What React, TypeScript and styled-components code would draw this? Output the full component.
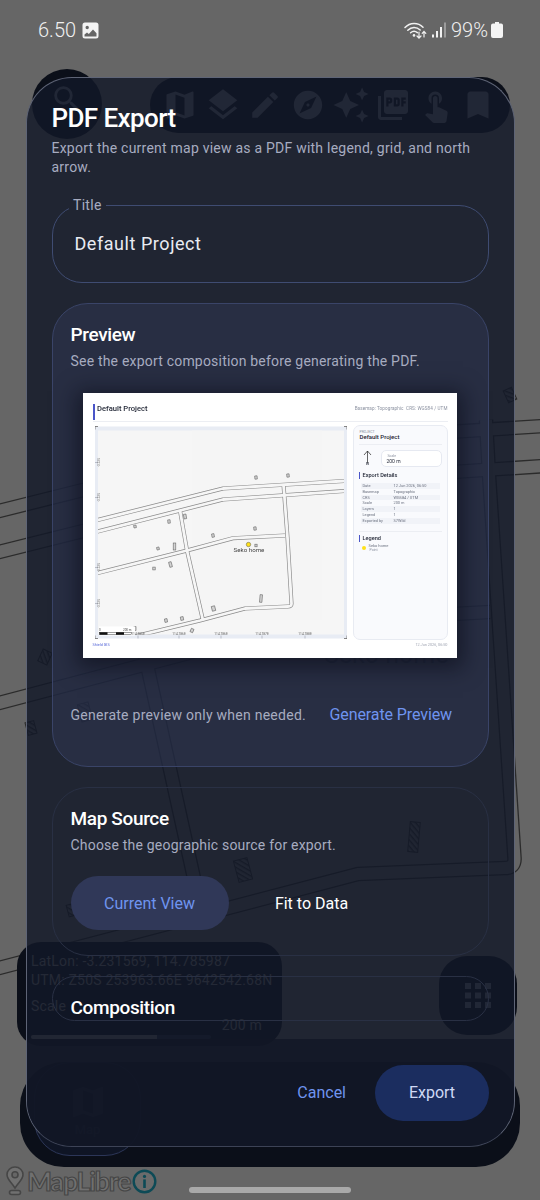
import React from "react";
import styled, { createGlobalStyle } from "styled-components";
import {
  MdMap, MdLayers, MdEdit, MdExplore, MdAutoAwesome, MdPictureAsPdf, MdTouchApp, MdBookmark, MdSearch,
} from "react-icons/md";

const FONT = `Roboto, "Noto Sans", sans-serif`;

const Global = createGlobalStyle`
  html, body { margin: 0; padding: 0; background: #666; }
  body { font-family: ${FONT}; }
  * { box-sizing: border-box; }
`;

const Screen = styled.div`
  position: relative; width: 540px; height: 1200px; overflow: hidden; background: #666666;
`;
const MapCanvas = styled.svg`
  position: absolute; inset: 0; width: 540px; height: 1200px;
`;
const MapLabel = styled.div`
  position: absolute; left: 324px; top: 640px; font-size: 25px; color: #333; white-space: nowrap;
`;

/* status bar */
const StatusBar = styled.div`
  position: relative; height: 60px; padding: 0 37px 0 38px; display: flex; align-items: center; justify-content: space-between; color: #f1f1f1;
`;
const StatusSide = styled.div`
  display: flex; align-items: center; gap: ${(p: { $gap: number }) => p.$gap}px;
`;
const StatusText = styled.span`
  font-size: 20px; font-weight: 300; line-height: 1;
`;
const Battery = styled.span`
  margin-left: -2px; display: flex;
`;

/* things behind the dialog */
const SearchCircle = styled.div`
  position: absolute; left: 32px; top: 69px; width: 70px; height: 70px; border-radius: 50%; background: #0b0f19;
  display: flex; align-items: flex-start; justify-content: center; padding-top: 13px; color: #6c707c;
`;
const ToolPill = styled.div`
  position: absolute; left: 150px; top: 77px; width: 360px; height: 56px; border-radius: 28px; background: #0b0f19;
  display: grid; grid-template-columns: repeat(8, 42.6px); align-items: center; justify-items: center; padding: 0 0 0 9px; color: #6c707c;
`;
const CoordPanel = styled.div`
  position: absolute; left: 17px; top: 942px; width: 265px; height: 104px; border-radius: 24px; background: #0b0f19;
  padding: 10px 14px; color: #7c7c7c; font-size: 14px; line-height: 19px; white-space: nowrap; letter-spacing: 0.2px;
`;
const ScaleLine = styled.div`
  margin-top: 7px;
`;
const ScaleRow = styled.div`
  display: flex; align-items: center; justify-content: flex-end; height: 19px; padding-right: 6px;
`;
const ScaleTrack = styled.div`
  width: 180px; height: 4px; border-radius: 2px; background: #222836; overflow: hidden;
`;
const ScaleFill = styled.div`
  width: 70%; height: 100%; background: #6c6c6c;
`;
const GridButton = styled.div`
  position: absolute; left: 439px; top: 956px; width: 78px; height: 79px; border-radius: 28px; background: #0b0f19;
  display: flex; align-items: center; justify-content: center; color: #6c707c;
`;
const BottomNav = styled.div`
  position: absolute; left: 20px; top: 1062px; width: 500px; height: 105px; border-radius: 44px; background: #0b0f19;
`;
const NavItem = styled.div`
  position: absolute; left: 14px; top: 0; width: 107px; height: 94px; border-radius: 36px; border: 1px solid #2c3658;
  background: #0f1525; display: flex; flex-direction: column; align-items: center; justify-content: center; color: #4a5060; font-size: 13px;
`;

/* dialog */
const Dialog = styled.div`
  position: absolute; left: 26px; top: 77px; width: 489px; height: 1070px; border-radius: 46px; overflow: hidden;
  background: rgba(18, 24, 40, 0.83); border: 1.5px solid #5e6476; border-bottom-color: #3d4356;
  display: flex; flex-direction: column;
`;
const DialogScroll = styled.div`
  flex: 1; min-height: 0; overflow: hidden; padding: 22px 25px 0 24.5px;
`;
const Heading = styled.h1`
  margin: 0; font-size: 26px; line-height: 36px; font-weight: 500; color: #fff; letter-spacing: -0.6px;
`;
const Sub = styled.p`
  margin: 3px 0 0; font-size: 14px; line-height: 18.5px; color: #a7acc0; letter-spacing: 0.23px;
`;
const TitleField = styled.fieldset`
  margin: 21px 0 0; padding: 0 22px; height: 86px; border: 1.5px solid #3f4c72; border-radius: 30px; display: flex; align-items: center;
`;
const TitleLegend = styled.legend`
  margin-left: -5.5px; padding: 0 4px; font-size: 14px; line-height: 16px; color: #a7acc0; letter-spacing: 0.3px;
`;
const TitleValue = styled.div`
  font-size: 18px; color: #e9ebf2; letter-spacing: 0.55px; margin-top: -8px;
`;
const Card = styled.section<{ $strong?: boolean }>`
  margin-top: 20px; padding: 19px 18px 0; border-radius: 36px;
  border: 1.5px solid ${(p) => (p.$strong ? "#3a4468" : "#293044")};
  background: ${(p) => (p.$strong ? "rgba(60, 70, 110, 0.3)" : "transparent")};
`;
const CardTitle = styled.h2`
  margin: 0; font-size: 19px; line-height: 24px; font-weight: 500; color: #fff; letter-spacing: -0.35px;
`;
const CardSub = styled.p`
  margin: 4px 0 0; font-size: 14px; line-height: 20px; color: #a7acc0; letter-spacing: 0.2px;
`;
const PreviewRow = styled.div`
  height: 108px; display: flex; align-items: center; justify-content: space-between; padding: 6px 18px 0 0;
`;
const Hint = styled.span`
  font-size: 14px; color: #a7acc0; letter-spacing: 0.26px;
`;
const LinkAction = styled.span`
  font-size: 16px; color: #6f94ef; margin-top: -2px; letter-spacing: -0.1px;
`;
const Choices = styled.div`
  display: flex; margin-top: 21px; height: 54px; margin-bottom: 25px;
`;
const Choice = styled.div<{ $on?: boolean }>`
  width: ${(p) => (p.$on ? 158 : 146)}px; margin-left: ${(p) => (p.$on ? 0 : 10)}px; border-radius: 27px; display: flex; align-items: center; justify-content: center;
  font-size: 16px; color: ${(p) => (p.$on ? "#6f94ef" : "#ffffff")}; background: ${(p) => (p.$on ? "#303858" : "transparent")};
`;
const Footer = styled.div`
  height: 107px; flex: none; background: rgba(17, 22, 37, 0.8); display: flex; align-items: center; justify-content: flex-end; gap: 29px; padding: 0 25px 0 0;
`;
const Cancel = styled.span`
  font-size: 16px; color: #6f94ef;
`;
const ExportButton = styled.div`
  width: 114px; height: 56px; border-radius: 28px; background: #1b2d5f; color: #cfd9f5; font-size: 16px; display: flex; align-items: center; justify-content: center;
`;

/* thumbnail page */
const PageShot = styled.div`
  width: 374px; height: 265px; margin: 22px 0 0 12px; background: #fff; padding: 11px 9px 0 10px; display: flex; flex-direction: column;
  box-shadow: 0 4px 20px 6px rgba(8, 10, 20, 0.55); filter: blur(0.28px); color: #1f2433;
`;
const PageHead = styled.div`
  height: 18px; display: flex; justify-content: space-between; align-items: flex-start; border-bottom: 1px solid #eceef3;
`;
const PageTitle = styled.div`
  height: 16px; padding-left: 2.5px; border-left: 2px solid #4a55c8; font-size: 7.6px; line-height: 9px; font-weight: 500; color: #1f2433;
`;
const PageMeta = styled.div`
  font-size: 4.6px; line-height: 10px; color: #8b91a0; letter-spacing: 0.1px;
`;
const PageBody = styled.div`
  margin-top: 3px; height: 216px; display: flex; gap: 6px; padding-left: 2px;
`;
const MapFrame = styled.svg`
  width: 252px; height: 213px; margin-top: 1px; flex: none; display: block;
`;
const Side = styled.div`
  flex: 1; height: 215px; border: 1px solid #e8ebf2; border-radius: 7px; background: #f9fafd; padding: 4px 5px;
`;
const Tiny = styled.div`
  font-size: 3.5px; line-height: 4px; color: #8b91a0; padding-left: 1px;
`;
const SideName = styled.div`
  font-size: 6px; line-height: 6px; font-weight: 500; padding: 0 0 4px 1px; border-bottom: 1px solid #eceef3;
`;
const NorthRow = styled.div`
  display: flex; align-items: center; gap: 7px; margin-top: 4px; padding-left: 3px; height: 18px;
`;
const North = styled.div`
  width: 12px; display: flex; flex-direction: column; align-items: center; font-size: 3.5px; font-weight: 700; line-height: 3px;
`;
const ScaleBox = styled.div`
  flex: 1; height: 17px; border-radius: 5px; border: 1px solid #e6e9f1; background: #fff; padding: 3px 0 0 5px;
`;
const ScaleVal = styled.div`
  font-size: 5px; line-height: 7px; color: #2a2f3e;
`;
const SideHead = styled.div<{ $top: number }>`
  margin-top: ${(p) => p.$top}px; height: 7px; padding-left: 3px; border-left: 1.5px solid #4a55c8; font-size: 5.6px; line-height: 7px; font-weight: 500;
`;
const DetailRows = styled.div`
  margin-top: 4px; padding: 0 2px; display: grid; grid-template-columns: 31px 1fr; grid-auto-rows: 5.8px;
`;
const Cell = styled.div<{ $shade?: boolean }>`
  font-size: 3.9px; line-height: 5.8px; color: #6c7280; padding-left: 2px; background: ${(p) => (p.$shade ? "#f1f3f8" : "transparent")}; white-space: nowrap;
`;
const SideRule = styled.div`
  height: 1px; background: #eceef3; margin-top: 7px;
`;
const LegendRow = styled.div`
  display: flex; gap: 3px; margin: 2px 0 0 3px; align-items: center;
`;
const LegendDot = styled.div`
  width: 4px; height: 4px; border-radius: 50%; background: #ffe11a;
`;
const LegendName = styled.div`
  font-size: 4px; line-height: 4.5px; color: #6c7280;
`;
const PageFoot = styled.div`
  display: flex; justify-content: space-between; font-size: 3.8px; line-height: 6px; color: #a0a5b2; padding-top: 1px;
`;
const FootBrand = styled.span`
  color: #5566d8;
`;

/* logo */
const LogoWrap = styled.div`
  position: absolute; left: 6px; top: 1166px; display: flex; align-items: center; height: 30px;
`;
const LogoText = styled.span`
  font-family: Lato, ${FONT}; font-size: 26.5px; font-weight: 700; line-height: 29px; color: #707070; -webkit-text-stroke: 1.2px #464646; letter-spacing: -1.1px; margin: 0 2px 0 3px;
`;
const HomeBar = styled.div`
  position: absolute; left: 189px; top: 1187px; width: 162px; height: 6px; border-radius: 3px; background: #a9a9a9;
`;

/* roads in the page's pixels */
const BIG_ROADS = [
  "M-5 512 L271 443 L545 426",
  "M-5 553 L271 484 L545 466",
  "M-5 704 L306 622 L490 612",
  "M-5 969 L358 874 L505 868 Q515 868 514.5 858 L489 475 L486 420",
  "M116 524 L201 910",
];
const BIG_BUILDINGS: [number, number, number, number, number][] = [
  [45, 657, 10, 13, 25], [31, 728, 9, 13, -15], [510, 395, 9, 13, -25], [414, 837, 10, 30, 5], [243, 870, 14, 22, -15],
  [72, 910, 9, 12, -15], [130, 905, 9, 12, -10], [85, 712, 11, 18, -15], [160, 612, 10, 14, -15],
];
/* roads and buildings in the thumbnail's pixels */
const THUMB_ROADS = [
  "M88 522 L223 488 L352 480",
  "M88 533.5 L223 499 L352 490",
  "M88 575 L187 550 L233 537.7 L285 535",
  "M130 637 L200 620 L245 608 L288 606 Q291.7 606 291.5 603 L287.5 537 L283.5 484",
  "M180 510 L187 550 L203 620",
];
const THUMB_BUILDINGS: [number, number, number, number, number][] = [
  [256, 477, 2.4, 3.2, -5], [288, 475, 2.4, 3.2, -5], [135, 526, 2.4, 2.6, -10], [169, 521, 2.4, 3.4, -5],
  [185, 516, 2.6, 4.6, -10], [255, 528, 2.4, 3.2, -5], [213, 535, 2.4, 3.4, -10], [158, 548, 2.4, 2.6, -15],
  [174.5, 546, 2.6, 7, 0], [154, 568, 2.4, 2.8, 0], [170.5, 564, 2.6, 5.2, -15], [166, 620, 2.6, 3.4, -10],
  [182, 618, 2.8, 3.4, -10], [192, 630, 2.8, 3.6, 25], [213.5, 608, 3.4, 4.8, -15], [261, 598, 2.4, 7.6, 5],
  [135, 628, 2, 3.6, 0], [256, 545, 2.2, 2.6, 0],
];

type Box = [number, number, number, number, number];
type DrawProps = {
  id: string; roads: string[]; boxes: Box[]; casing: string; fill: string; caseW: number; fillW: number;
  hatch: boolean; line: string; boxW: number;
};
const MapDrawing = ({ id, roads, boxes, casing, fill, caseW, fillW, hatch, line, boxW }: DrawProps) => (
  <>
    {hatch && (
      <defs>
        <pattern id={id} width="4" height="4" patternUnits="userSpaceOnUse" patternTransform="rotate(45)">
          <rect width="4" height="1.4" fill={line} />
        </pattern>
      </defs>
    )}
    {roads.map((d) => <path key={d} d={d} fill="none" stroke={casing} strokeWidth={caseW} strokeLinejoin="round" />)}
    {roads.map((d) => <path key={d + "f"} d={d} fill="none" stroke={fill} strokeWidth={fillW} strokeLinejoin="round" />)}
    {boxes.map(([x, y, w, h, r]) => (
      <rect key={`${x}-${y}`} x={x - w / 2} y={y - h / 2} width={w} height={h}
        transform={`rotate(${r} ${x} ${y})`} fill={hatch ? `url(#${id})` : "#d4d4d4"} stroke={line} strokeWidth={boxW} />
    ))}
  </>
);

const DETAILS = [
  ["Date", "12 Jun 2026, 06:50"], ["Basemap", "Topographic"], ["CRS", "WGS84 / UTM"], ["Scale", "200 m"],
  ["Layers", "1"], ["Legend", "1"], ["Exported by", "S7Wild"],
];

const ThumbMap = () => (
  <MapFrame viewBox="95 426 252 212">
    <defs><clipPath id="mc"><rect x="98" y="430" width="246" height="204" /></clipPath></defs>
    <rect x="95" y="426" width="252" height="212" fill="#e8ecf4" />
    <rect x="98" y="430" width="246" height="204" fill="#f6f6f6" />
    <rect x="192" y="430" width="130" height="190" fill="#f5f5f5" />
    <g clipPath="url(#mc)">
      <MapDrawing id="thumb" roads={THUMB_ROADS} boxes={THUMB_BUILDINGS} casing="#8a8a8a" fill="#f6f6f6" caseW={4.1} fillW={2.8} hatch={false} line="#666" boxW={0.6} />
    </g>
    <path d="M95 429 V426 H98 M344 426 H347 V429 M95 635 V638 H98 M344 638 H347 V635" fill="none" stroke="#555" strokeWidth="0.7" />
    <circle cx="248.5" cy="544" r="2.2" fill="#ffe11a" stroke="#555" strokeWidth="0.5" />
    <text x="249" y="551" textAnchor="middle" fontSize="6.2" fill="#444" fontFamily={FONT}>Seko home</text>
    <rect x="99" y="626" width="36" height="9" fill="#fff" />
    <text x="99" y="630" fontSize="3" fill="#444" fontFamily={FONT}>0</text>
    <text x="123" y="630" fontSize="3" fill="#444" fontFamily={FONT}>200 m</text>
    <path d="M99.5 633 H107.5 M116 633 H124" stroke="#111" strokeWidth="2.4" />
    <rect x="99.5" y="631.8" width="32" height="2.4" fill="none" stroke="#111" strokeWidth="0.4" />
    {[138, 179, 221, 262, 305].map((x, i) => (
      <g key={x}>
        <path d={`M${x} 635 V638`} stroke="#8a8f9c" strokeWidth="0.5" />
        <text x={x} y="634" textAnchor="middle" fontSize="3.2" fill="#666" fontFamily={FONT}>{["114.785E", "114.786E", "114.786E", "114.787E", "114.788E"][i]}</text>
      </g>
    ))}
    {[462, 497, 567, 603].map((y) => (
      <g key={y}>
        <path d={`M95 ${y} H98`} stroke="#8a8f9c" strokeWidth="0.5" />
        <text x="100" y={y} textAnchor="middle" fontSize="3.2" fill="#777" fontFamily={FONT} transform={`rotate(-90 100 ${y})`}>-3.235</text>
      </g>
    ))}
  </MapFrame>
);

const ImageGlyph = () => (
  <svg width="17" height="17" viewBox="0 0 17 17">
    <path fillRule="evenodd" fill="#f4f4f4" d="M3 0.5h11a2.5 2.5 0 0 1 2.5 2.5v11a2.5 2.5 0 0 1-2.5 2.5H3A2.5 2.5 0 0 1 0.5 14V3A2.5 2.5 0 0 1 3 0.5ZM5.2 3.8a1.7 1.7 0 1 0 0 3.4a1.7 1.7 0 0 0 0-3.4ZM2.5 12.5v2h12v-3.2L11 7.6L6.8 12L5 10.5Z" />
  </svg>
);
const WifiGlyph = () => (
  <svg width="23" height="19" viewBox="0 0 23 19" fill="none" stroke="#f1f1f1" strokeLinecap="round">
    <path d="M1 6.5C6 1.2 14 1.2 19 6.2" strokeWidth="1.5" />
    <path d="M3.8 9.2C7.5 5.5 12.5 5.5 16.2 9" strokeWidth="1.5" />
    <path d="M6.6 11.8C8.8 9.8 11.2 9.8 13.4 11.6" strokeWidth="1.5" />
    <circle cx="10" cy="14.4" r="1.3" fill="#f1f1f1" stroke="none" />
    <path d="M15 11V17M13 15L15 17.2L17 15" strokeWidth="1.2" />
    <path d="M20 16V10.5M18.2 12.4L20 10.4L21.8 12.4" strokeWidth="1.2" />
  </svg>
);
const SignalGlyph = () => (
  <svg width="14" height="16" viewBox="0 0 14 16">
    <rect x="0" y="12.5" width="2" height="3" fill="#f1f1f1" />
    <rect x="4" y="9" width="2" height="6.5" fill="#f1f1f1" />
    <rect x="8" y="5" width="2" height="10.5" fill="#f1f1f1" />
    <rect x="12" y="0.5" width="2" height="15" fill="#9b9b9b" />
  </svg>
);
const BatteryGlyph = () => (
  <svg width="12" height="16" viewBox="0 0 12 16">
    <path fill="#f4f4f4" d="M4 0h4v1.4h1.8A2 2 0 0 1 12 3.4V14a2 2 0 0 1-2 2H2a2 2 0 0 1-2-2V3.4a2 2 0 0 1 2-2H4Z" />
  </svg>
);
const GridGlyph = () => (
  <svg width="26" height="25" viewBox="0 0 26 25" fill="currentColor">
    {[0, 9.5, 19].map((y) => [0, 10, 20].map((x) => <rect key={`${x}${y}`} x={x} y={y} width="6" height="6" />))}
  </svg>
);
const PinGlyph = () => (
  <svg width="18" height="30" viewBox="0 0 18 30" fill="none" stroke="#464646" strokeWidth="1.6">
    <path d="M9 1C4.5 1 1 4.4 1 8.8C1 13.4 5.5 16.5 9 22C12.5 16.5 17 13.4 17 8.8C17 4.4 13.5 1 9 1Z" fill="#707070" />
    <circle cx="9" cy="8.8" r="3" fill="#666" />
    <rect x="3.5" y="24.5" width="11" height="4" rx="2" fill="#707070" />
  </svg>
);
const InfoGlyph = () => (
  <svg width="25" height="25" viewBox="0 0 25 25">
    <circle cx="12.5" cy="12.5" r="10.8" fill="#6b6b6b" stroke="#0d4a56" strokeWidth="2.4" />
    <rect x="11.2" y="10.4" width="2.6" height="8.6" fill="#0d4a56" />
    <circle cx="12.5" cy="7.4" r="1.6" fill="#0d4a56" />
  </svg>
);

export default function App() {
  return (
    <Screen>
      <Global />
      <MapCanvas viewBox="0 0 540 1200">
        <MapDrawing id="big" roads={BIG_ROADS} boxes={BIG_BUILDINGS} casing="#2b2b2b" fill="#666666" caseW={14.6} fillW={12} hatch line="#2b2b2b" boxW={1} />
      </MapCanvas>
      <MapLabel>Seko home</MapLabel>

      <SearchCircle><MdSearch size={34} /></SearchCircle>
      <ToolPill>
        <MdMap size={36} /><MdLayers size={38} /><MdEdit size={34} /><MdExplore size={34} />
        <MdAutoAwesome size={38} /><MdPictureAsPdf size={36} /><MdTouchApp size={36} /><MdBookmark size={36} />
      </ToolPill>
      <CoordPanel>
        <div>LatLon: -3.231569, 114.785987</div>
        <div>UTM: Z50S 253963.66E 9642542.68N</div>
        <ScaleLine>Scale</ScaleLine>
        <ScaleRow>200 m</ScaleRow>
        <ScaleTrack><ScaleFill /></ScaleTrack>
      </CoordPanel>
      <GridButton><GridGlyph /></GridButton>
      <BottomNav>
        <NavItem><MdMap size={40} />Map</NavItem>
      </BottomNav>

      <LogoWrap>
        <PinGlyph />
        <LogoText>MapLibre</LogoText>
        <InfoGlyph />
      </LogoWrap>
      <HomeBar />

      <StatusBar>
        <StatusSide $gap={6}><StatusText>6.50</StatusText><ImageGlyph /></StatusSide>
        <StatusSide $gap={5}>
          <WifiGlyph /><SignalGlyph />
          <StatusText>99%</StatusText>
          <Battery><BatteryGlyph /></Battery>
        </StatusSide>
      </StatusBar>

      <Dialog>
        <DialogScroll>
          <Heading>PDF Export</Heading>
          <Sub>Export the current map view as a PDF with legend, grid, and north arrow.</Sub>
          <TitleField>
            <TitleLegend>Title</TitleLegend>
            <TitleValue>Default Project</TitleValue>
          </TitleField>
          <Card $strong>
            <CardTitle>Preview</CardTitle>
            <CardSub>See the export composition before generating the PDF.</CardSub>
            <PageShot>
              <PageHead>
                <PageTitle>Default Project</PageTitle>
                <PageMeta>Basemap: Topographic&nbsp;&nbsp;CRS: WGS84 / UTM</PageMeta>
              </PageHead>
              <PageBody>
                <ThumbMap />
                <Side>
                  <Tiny>PROJECT</Tiny>
                  <SideName>Default Project</SideName>
                  <NorthRow>
                    <North>
                      <svg width="9" height="13" viewBox="0 0 9 13" fill="none" stroke="#222" strokeWidth="0.7"><path d="M4.5 13V1M1 5L4.5 1L8 5" /></svg>
                      N
                    </North>
                    <ScaleBox><Tiny>Scale</Tiny><ScaleVal>200 m</ScaleVal></ScaleBox>
                  </NorthRow>
                  <SideHead $top={5}>Export Details</SideHead>
                  <DetailRows>
                    {DETAILS.map(([k, v], i) => (
                      <React.Fragment key={k}>
                        <Cell $shade={i % 2 === 0}>{k}</Cell>
                        <Cell $shade={i % 2 === 0}>{v}</Cell>
                      </React.Fragment>
                    ))}
                  </DetailRows>
                  <SideRule />
                  <SideHead $top={3}>Legend</SideHead>
                  <LegendRow>
                    <LegendDot />
                    <LegendName>Seko home<Tiny>Point</Tiny></LegendName>
                  </LegendRow>
                </Side>
              </PageBody>
              <PageFoot>
                <FootBrand>Shield GIS</FootBrand>
                <span>12 Jun 2026, 06:50</span>
              </PageFoot>
            </PageShot>
            <PreviewRow>
              <Hint>Generate preview only when needed.</Hint>
              <LinkAction>Generate Preview</LinkAction>
            </PreviewRow>
          </Card>
          <Card>
            <CardTitle>Map Source</CardTitle>
            <CardSub>Choose the geographic source for export.</CardSub>
            <Choices>
              <Choice $on>Current View</Choice>
              <Choice>Fit to Data</Choice>
            </Choices>
          </Card>
          <Card>
            <CardTitle>Composition</CardTitle>
          </Card>
        </DialogScroll>
        <Footer>
          <Cancel>Cancel</Cancel>
          <ExportButton>Export</ExportButton>
        </Footer>
      </Dialog>
    </Screen>
  );
}
